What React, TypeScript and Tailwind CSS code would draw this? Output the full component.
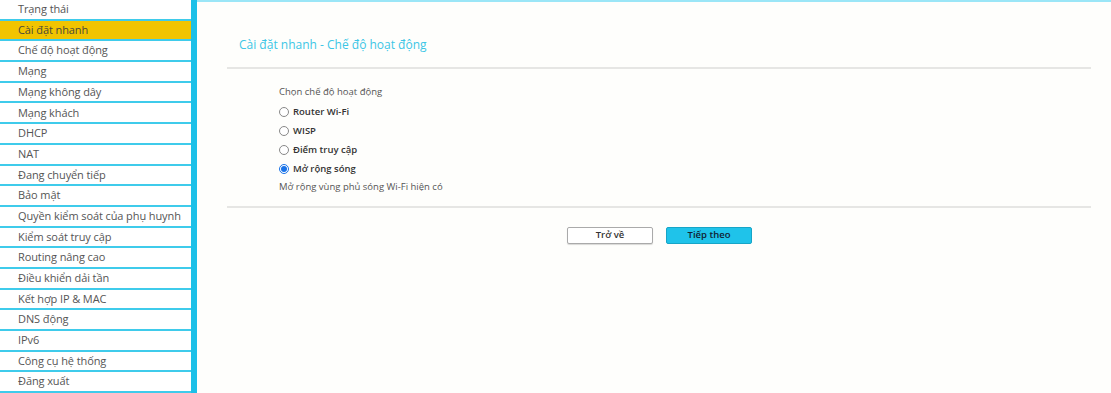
import { useState } from "react";

const menu = [
  "Trạng thái",
  "Cài đặt nhanh",
  "Chế độ hoạt động",
  "Mạng",
  "Mạng không dây",
  "Mạng khách",
  "DHCP",
  "NAT",
  "Đang chuyển tiếp",
  "Bảo mật",
  "Quyền kiểm soát của phụ huynh",
  "Kiểm soát truy cập",
  "Routing nâng cao",
  "Điều khiển dải tần",
  "Kết hợp IP & MAC",
  "DNS động",
  "IPv6",
  "Công cụ hệ thống",
  "Đăng xuất",
];

const modes = ["Router Wi-Fi", "WISP", "Điểm truy cập", "Mở rộng sóng"];

export default function App() {
  const [mode, setMode] = useState("Mở rộng sóng");

  return (
    <div className="flex h-[393px] w-[1111px] overflow-hidden bg-[#fefefc] font-['Open_Sans',sans-serif] text-[#555]">
      {/* SIDEBAR */}
      <nav className="flex w-[191px] shrink-0 flex-col bg-white">
        {menu.map((item) => (
          <div
            key={item}
            className={`flex flex-1 items-center border-b-2 border-[#3fcbeb] pl-[18px] text-[11px] tracking-[-0.1px] ${
              item === "Cài đặt nhanh" ? "bg-[#f1c400] text-[#4a4a3a]" : "text-[#555]"
            }`}
          >
            {item}
          </div>
        ))}
      </nav>
      <div className="w-[6px] shrink-0 bg-[#1cc0e8]" />

      {/* MAIN */}
      <main className="flex flex-1 flex-col border-t-2 border-[#9be6f7]">
        <h1 className="ml-[42px] mt-[34px] text-[12px] text-[#3cc6e6]">
          Cài đặt nhanh - Chế độ hoạt động
        </h1>
        <div className="ml-[30px] mr-[20px] mt-[13px] h-[2px] bg-[#e6e6e4]" />

        <div className="ml-[82px] mt-[16px] flex flex-col text-[9.5px]">
          <p className="text-[#555]">Chọn chế độ hoạt động</p>
          <div className="mt-[6px] flex flex-col gap-[6px]">
            {modes.map((m) => (
              <label key={m} className="flex h-[13px] items-center gap-[4px] font-semibold text-[#333]">
                <span
                  onClick={() => setMode(m)}
                  className={`flex h-[10px] w-[10px] items-center justify-center rounded-full border ${
                    mode === m ? "border-[#1a73e8] bg-white" : "border-[#888] bg-white"
                  }`}
                >
                  {mode === m && <span className="h-[6px] w-[6px] rounded-full bg-[#1a73e8]" />}
                </span>
                {m}
              </label>
            ))}
          </div>
          <p className="mt-[5px] text-[#555]">Mở rộng vùng phủ sóng Wi-Fi hiện có</p>
        </div>

        <div className="ml-[30px] mr-[20px] mt-[11px] h-[2px] bg-[#e6e6e4]" />

        <div className="ml-[370px] mt-[19px] flex gap-[13px]">
          <button className="h-[17px] w-[86px] rounded-[2px] border border-[#aaa] bg-white text-[9.5px] font-semibold text-[#333] shadow-[0_1px_1px_rgba(0,0,0,0.15)]">
            Trở về
          </button>
          <button className="h-[17px] w-[86px] rounded-[2px] border border-[#17a5c7] bg-[#1fc3ea] text-[9.5px] font-semibold text-[#123]">
            Tiếp theo
          </button>
        </div>
      </main>
    </div>
  );
}
